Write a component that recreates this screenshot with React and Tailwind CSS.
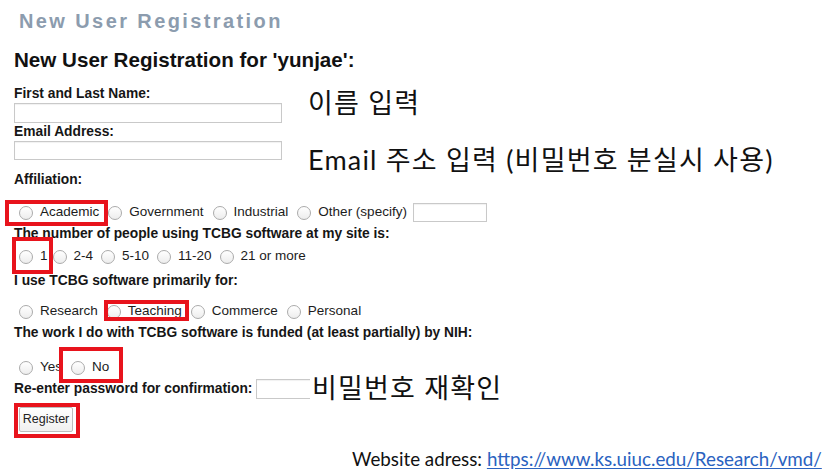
import React from "react";

function Radio({ label, box, gap = "mr-[4px]" }) {
  return (
    <span className={`relative flex items-center ${gap}`}>
      <span className="ml-[5px] mr-[7px] mt-[2px] w-[14px] h-[14px] rounded-full border border-[#ababab] bg-gradient-to-b from-white to-[#ededed]" />
      <span>{label}</span>
      {box && <span className={`absolute border-4 border-[#e8131c] ${box}`} />}
    </span>
  );
}

function Label({ children, className = "" }) {
  return <div className={`text-[13.8px] leading-[14px] font-bold text-[#161616] ${className}`}>{children}</div>;
}

function TextBox({ className = "" }) {
  return <div className={`border border-[#c9c9c9] bg-white shadow-[inset_0_1px_1px_rgba(0,0,0,0.06)] ${className}`} />;
}

export default function App() {
  const note = "absolute bg-white text-[27px] leading-none tracking-[1.2px] text-[#111] font-['Lato','Noto_Sans_CJK_KR',sans-serif]";

  return (
    <div className="relative w-[833px] h-[474px] bg-white overflow-hidden font-['Liberation_Sans',Arial,sans-serif]">
      <div className="px-[14px] pt-[9px]">
        {/* page title */}
        <div className="pl-[5px] text-[20px] leading-[24px] font-bold tracking-[2.4px] text-[#8c9cae]">
          New User Registration
        </div>
        <h1 className="mt-[16px] text-[20.6px] leading-[22px] font-bold text-[#111]">
          New User Registration for 'yunjae':
        </h1>

        <Label className="mt-[16px]">First and Last Name:</Label>
        <TextBox className="mt-[2px] w-[268px] h-[20px]" />
        <Label className="mt-[2px]">Email Address:</Label>
        <TextBox className="mt-[2px] w-[268px] h-[19px]" />

        <Label className="mt-[13px]">Affiliation:</Label>
        <div className="mt-[15px] h-[20px] flex items-center text-[13.5px] text-[#1c1c1c]">
          <Radio label="Academic" box="-left-[9px] -top-[2px] w-[103px] h-[26px]" />
          <Radio label="Government" />
          <Radio label="Industrial" />
          <Radio label="Other (specify)" />
          <TextBox className="ml-[2px] w-[74px] h-[19px]" />
        </div>

        <Label className="mt-[5px]">The number of people using TCBG software at my site is:</Label>
        <div className="mt-[5px] h-[20px] flex items-center text-[13.5px] text-[#1c1c1c]">
          <Radio label="1" gap="mr-0" box="-left-[2px] -top-[9px] w-[41px] h-[37px]" />
          <Radio label="2-4" gap="mr-[3px]" />
          <Radio label="5-10" gap="mr-[3px]" />
          <Radio label="11-20" gap="mr-[3px]" />
          <Radio label="21 or more" gap="mr-[3px]" />
        </div>

        <Label className="mt-[8px]">I use TCBG software primarily for:</Label>
        <div className="mt-[13px] h-[20px] flex items-center text-[13.5px] text-[#1c1c1c]">
          <Radio label="Research" />
          <Radio label="Teaching" box="left-[2px] -top-[1px] w-[85px] h-[21px]" />
          <Radio label="Commerce" />
          <Radio label="Personal" />
        </div>

        <Label className="mt-[5px]">The work I do with TCBG software is funded (at least partially) by NIH:</Label>
        <div className="mt-[17px] h-[20px] flex items-center text-[13.5px] text-[#1c1c1c]">
          <Radio label="Yes" />
          <Radio label="No" box="-left-[7px] -top-[10px] w-[64px] h-[36px]" />
        </div>

        <div className="mt-[2px] h-[20px] flex items-center">
          <Label>Re-enter password for confirmation:</Label>
          <TextBox className="ml-[4px] w-[74px] h-[20px]" />
        </div>

        <div className="mt-[7px] pl-[5px]">
          <button className="relative h-[25px] w-[54px] border border-[#bdbdbd] rounded-[2px] bg-gradient-to-b from-white to-[#f0f0f0] text-[12.5px] text-[#222]">
            Register
            <span className="absolute -left-[6px] -top-[5px] w-[66px] h-[35px] border-4 border-[#e8131c]" />
          </button>
        </div>
      </div>

      {/* slide annotations */}
      <div className={`${note} left-[308px] top-[89px]`}>이름 입력</div>
      <div className={`${note} left-[308px] top-[146px]`}>Email 주소 입력 (비밀번호 분실시 사용)</div>
      <div className={`${note} left-[310px] top-[374px] pl-[2px]`}>비밀번호 재확인</div>
      <div className="absolute left-[352px] top-[447px] text-[18.8px] leading-[24px] text-[#111] font-['Lato',sans-serif]">
        Website adress:{" "}
        <span className="text-[#2a62c0] underline underline-offset-2">https://www.ks.uiuc.edu/Research/vmd/</span>
      </div>
    </div>
  );
}
